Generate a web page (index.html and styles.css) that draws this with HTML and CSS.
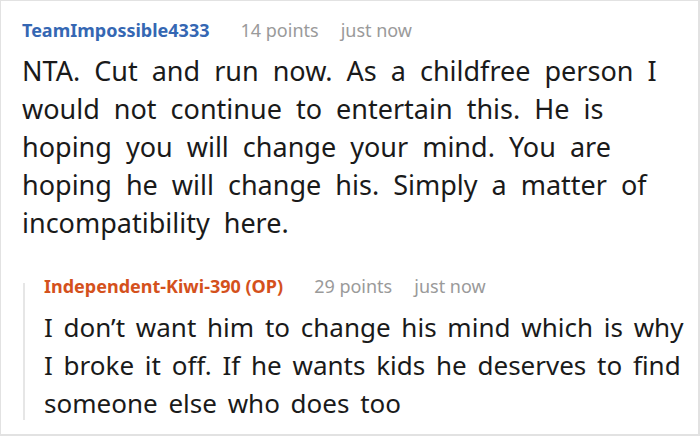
FILE: index.html
```html
<!DOCTYPE html>
<html>
<head>
<meta charset="utf-8">
<link rel="stylesheet" href="styles.css">
</head>
<body>
<div class="card">
  <div class="comment">
    <div class="meta">
      <span class="author">TeamImpossible4333</span>
      <span class="points">14 points</span>
      <span class="time">just now</span>
    </div>
    <p class="text">NTA. Cut and run now. As a childfree person I would not continue to entertain this. He is hoping you will change your mind. You are hoping he will change his. Simply a matter of incompatibility here.</p>
  </div>
  <div class="reply">
    <div class="thread-line"></div>
    <div class="reply-content">
      <div class="meta">
        <span class="author op">Independent-Kiwi-390 (OP)</span>
        <span class="points">29 points</span>
        <span class="time">just now</span>
      </div>
      <p class="text reply-text">I don’t want him to change his mind which is why I broke it off. If he wants kids he deserves to find someone else who does too</p>
    </div>
  </div>
</div>
</body>
</html>
```

FILE: styles.css
```css
html, body {
  margin: 0;
  padding: 0;
  background: #fff;
}
body {
  font-family: "Noto Sans", sans-serif;
  color: #1a1a1a;
}
.card {
  width: 700px;
  height: 436px;
  box-sizing: border-box;
  border: 1px solid #e2e2e2;
  border-right-width: 2px;
  border-bottom-width: 2px;
  padding: 17px 10px 0 21px;
  overflow: hidden;
}
.meta {
  display: flex;
  align-items: baseline;
  font-size: 18px;
  line-height: 24px;
  height: 24px;
}
.author {
  font-weight: 700;
  color: #3567b3;
  margin-right: 31px;
}
.author.op {
  color: #d4511c;
}
.points, .time {
  color: #9a9a9a;
}
.points {
  margin-right: 22px;
}
.text {
  margin: 10px 0 0;
  font-size: 27px;
  word-spacing: 7px;
  line-height: 38px;
}
.reply-text {
  font-size: 26px;
  word-spacing: 4px;
}
.reply {
  display: flex;
  margin-top: 32px;
}
.thread-line {
  width: 2px;
  flex: none;
  background: #e6e6e6;
  margin: 9px 0 2px 1px;
}
.reply-content {
  margin-left: 19px;
  flex: 1;
}
```
